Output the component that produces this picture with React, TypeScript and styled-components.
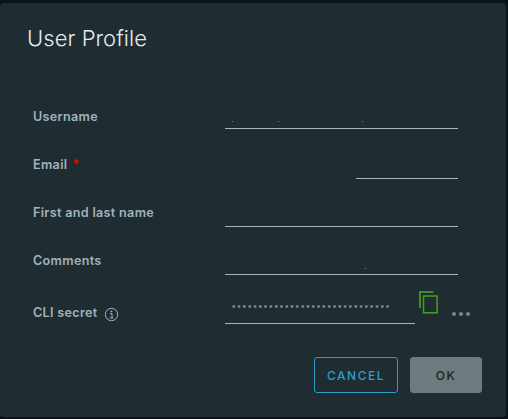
import React from "react";
import styled, { createGlobalStyle } from "styled-components";

const Global = createGlobalStyle`
  html, body { margin: 0; padding: 0; background: #0a1317; }
  * { box-sizing: border-box; }
`;

const Page = styled.div`
  width: 508px;
  height: 419px;
  padding: 3px 2px 2px 0;
  overflow: hidden;
  background: #0a1317;
  font-family: Inter, "Open Sans", "Liberation Sans", sans-serif;
`;

const Modal = styled.div`
  width: 100%;
  height: 100%;
  display: flex;
  flex-direction: column;
  background: #1f2d33;
  border-radius: 4px;
`;

const Title = styled.h3`
  margin: 0;
  padding: 21px 0 0 27px;
  height: 78px;
  font-size: 22px;
  line-height: 28px;
  font-weight: 300;
  letter-spacing: 0.05px;
  color: #e6ecef;
`;

const Form = styled.form`
  display: flex;
  flex-direction: column;
  padding-left: 33px;
`;

const Row = styled.div<{ $height: number; $gap: number }>`
  display: flex;
  align-items: flex-end;
  height: ${(p) => p.$height}px;
  & > label {
    margin-bottom: ${(p) => p.$gap}px;
  }
`;

const Label = styled.label`
  width: 192px;
  display: flex;
  align-items: center;
  font-size: 12.6px;
  line-height: 24px;
  font-weight: 600;
  letter-spacing: 0.32px;
  color: #a3b2ba;
`;

const Required = styled.span`
  margin-left: 5px;
  color: #c21d00;
`;

const InfoIcon = styled.svg`
  width: 15px;
  height: 15px;
  margin: 3px 0 0 6px;
`;

const Field = styled.div<{ $width: number; $offset?: number }>`
  position: relative;
  width: ${(p) => p.$width}px;
  margin-left: ${(p) => p.$offset ?? 0}px;
  height: 30px;
  border-bottom: 1px solid #a8b6bd;
`;

const Speck = styled.span<{ $left: number; $top: number }>`
  position: absolute;
  left: ${(p) => p.$left}px;
  top: ${(p) => p.$top}px;
  width: 1px;
  height: 1px;
  background: #7c8a90;
`;

const Secret = styled.span`
  position: absolute;
  left: 7px;
  top: 6px;
  font-family: "Liberation Sans", sans-serif;
  font-size: 10px;
  line-height: 14px;
  letter-spacing: 1.8px;
  white-space: nowrap;
  color: #7d8a90;
`;

const CopyIcon = styled.svg`
  width: 20px;
  height: 23px;
  margin: 0 0 10px 4px;
`;

const More = styled.span`
  display: flex;
  gap: 3.2px;
  margin: 0 0 8px 13px;
`;

const MoreDot = styled.i`
  width: 4px;
  height: 4px;
  border-radius: 50%;
  background: #7d8386;
`;

const Actions = styled.div`
  display: flex;
  justify-content: flex-end;
  gap: 12px;
  margin-top: 33px;
  padding-right: 24px;
`;

const Button = styled.button<{ $primary?: boolean }>`
  height: 36px;
  width: ${(p) => (p.$primary ? 72 : 84)}px;
  padding: 0;
  border-radius: 3px;
  border: 1px solid ${(p) => (p.$primary ? "#6f7a7e" : "#2b9fc9")};
  background: ${(p) => (p.$primary ? "#6f7a7e" : "transparent")};
  color: ${(p) => (p.$primary ? "#172227" : "#2b9fc9")};
  font-family: inherit;
  font-size: 12px;
  font-weight: 500;
  letter-spacing: 1.5px;
`;

const specks: Record<string, [number, number][]> = {
  username: [[7, 22], [53, 22], [137, 22]],
  comments: [[140, 23]],
};

export default function App() {
  return (
    <Page>
      <Global />
      <Modal>
        <Title>User Profile</Title>
        <Form>
          <Row $height={48} $gap={0}>
            <Label>Username</Label>
            <Field $width={233}>
              {specks.username.map(([l, t]) => <Speck key={l} $left={l} $top={t} />)}
            </Field>
          </Row>
          <Row $height={50} $gap={2}>
            <Label>Email<Required>*</Required></Label>
            <Field $width={102} $offset={131} />
          </Row>
          <Row $height={48} $gap={2}>
            <Label>First and last name</Label>
            <Field $width={233} />
          </Row>
          <Row $height={48} $gap={2}>
            <Label>Comments</Label>
            <Field $width={233}>
              {specks.comments.map(([l, t]) => <Speck key={l} $left={l} $top={t} />)}
            </Field>
          </Row>
          <Row $height={49} $gap={-1}>
            <Label>
              CLI secret
              <InfoIcon viewBox="0 0 15 15" fill="none">
                <circle cx="7.5" cy="7.5" r="6.2" stroke="#a3b2ba" strokeWidth="1" />
                <circle cx="7.5" cy="4.3" r="0.9" fill="#a3b2ba" />
                <path d="M6 6.6h2v4.4M5.6 11h3.8" stroke="#a3b2ba" strokeWidth="1" />
              </InfoIcon>
            </Label>
            <Field $width={190}>
              <Secret>{"•".repeat(30)}</Secret>
            </Field>
            <CopyIcon viewBox="0 0 20 23" fill="none">
              <path d="M1 17V1h13.5" stroke="#4ea525" strokeWidth="1.6" />
              <rect x="4.5" y="5" width="13.6" height="16.8" stroke="#3e9a22" strokeWidth="1.6" />
            </CopyIcon>
            <More>
              <MoreDot /><MoreDot /><MoreDot />
            </More>
          </Row>
        </Form>
        <Actions>
          <Button type="button">CANCEL</Button>
          <Button type="button" $primary>OK</Button>
        </Actions>
      </Modal>
    </Page>
  );
}
